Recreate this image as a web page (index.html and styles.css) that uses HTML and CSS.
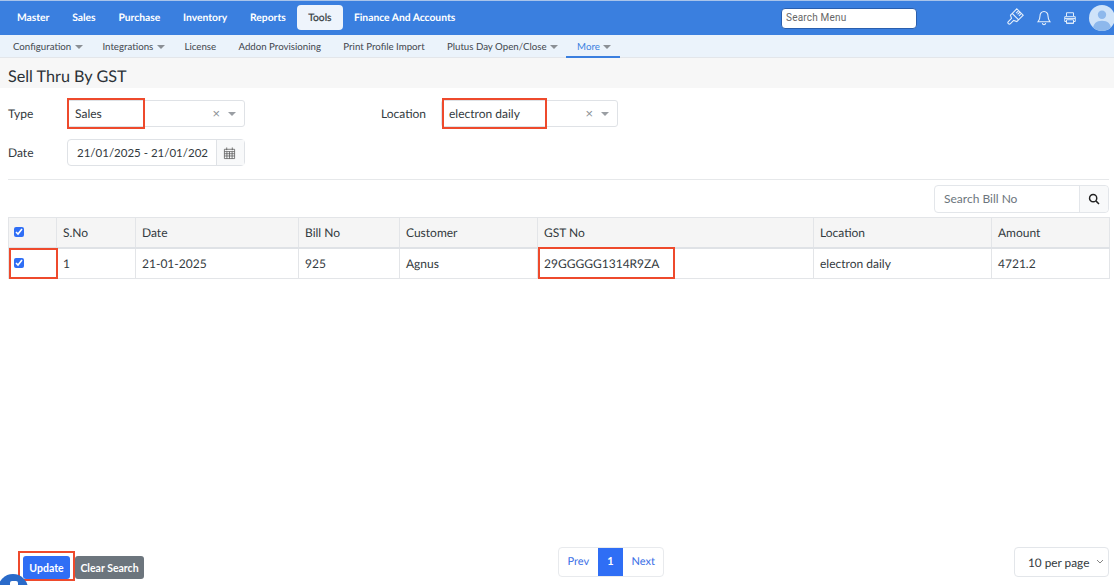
FILE: index.html
```html
<!DOCTYPE html>
<html lang="en">
<head>
<meta charset="utf-8">
<title>Sell Thru By GST</title>
<link rel="stylesheet" href="styles.css">
</head>
<body>
<div class="page">
  <header class="topbar">
    <nav class="mainnav">
      <a>Master</a><a>Sales</a><a>Purchase</a><a>Inventory</a><a>Reports</a><a class="active">Tools</a><a>Finance And Accounts</a>
    </nav>
    <input class="menu-search" placeholder="Search Menu">
    <div class="top-icons">
      <svg class="ti brush" viewBox="0 0 16 16"><g transform="rotate(45 8 8)"><path d="M3.500-.5h9v6.500h-9ZM3.500 6h9v2.500L9.500 10v4.500a1.500 1.500 0 0 1-3 0V10L3.500 8.500ZM6-.5V3M8-.5V3M10-.5V3"/></g></svg>
      <svg class="ti bell" viewBox="0 0 16 16"><path d="M8 1.500c-2.600 0-4 2-4 4.500 0 3-1 4.600-2 5.800h12c-1-1.200-2-2.800-2-5.800 0-2.500-1.400-4.500-4-4.500ZM6.300 13.200c.2 1 .9 1.500 1.700 1.500s1.500-.5 1.700-1.500"/></svg>
      <svg class="ti print" viewBox="0 0 16 16"><path d="M4 6V2h8v4M2 6.500h12v5.500h-2v2H4v-2H2ZM4 10h8v4H4ZM2 8.500h12"/></svg>
      <span class="avatar"><svg viewBox="0 0 28 28"><circle cx="14" cy="10.500" r="4.500"/><path d="M4 28c0-8 4-11 10-11s10 3 10 11Z"/></svg></span>
    </div>
  </header>
  <nav class="subnav">
    <a class="caret">Configuration</a><a class="caret">Integrations</a><a>License</a><a>Addon Provisioning</a><a>Print Profile Import</a><a class="caret before-more">Plutus Day Open/Close</a><a class="caret current">More</a>
  </nav>
  <h1 class="title">Sell Thru By GST</h1>
  <main class="content">
    <section class="filters">
      <div class="filter-row">
        <label class="flabel">Type</label>
        <div class="select type-select"><span class="value">Sales</span><span class="clear">×</span><span class="arrow"></span><i class="mark mark-type"></i></div>
        <label class="flabel loc-label">Location</label>
        <div class="select loc-select"><span class="value">electron daily</span><span class="clear">×</span><span class="arrow"></span><i class="mark mark-loc"></i></div>
      </div>
      <div class="filter-row">
        <label class="flabel">Date</label>
        <div class="date">
          <input class="date-value" readonly value="21/01/2025 - 21/01/2025">
          <span class="date-addon"><svg viewBox="0 0 14 14"><path d="M1.500 3h11v10h-11ZM1.500 5.500h11M4 1v3M10 1v3M1.500 7.800h11M1.500 10.200h11M4.200 5.500V13M7 5.500V13M9.800 5.500V13"/></svg></span>
        </div>
      </div>
    </section>
    <div class="search-row">
      <div class="bill-search">
        <input placeholder="Search Bill No">
        <span class="search-btn"><svg viewBox="0 0 14 14"><circle cx="6" cy="6" r="4.200"/><path d="m9.200 9.200 3.600 3.600"/></svg></span>
      </div>
    </div>
    <table class="grid">
      <colgroup><col class="c1"><col class="c2"><col class="c3"><col class="c4"><col class="c5"><col class="c6"><col class="c7"><col class="c8"></colgroup>
      <thead>
        <tr><th><input type="checkbox" checked></th><th>S.No</th><th>Date</th><th>Bill No</th><th>Customer</th><th>GST No</th><th>Location</th><th>Amount</th></tr>
      </thead>
      <tbody>
        <tr><td class="marked"><input type="checkbox" checked><i class="mark mark-check"></i></td><td>1</td><td>21-01-2025</td><td>925</td><td>Agnus</td><td class="marked">29GGGGG1314R9ZA<i class="mark mark-gst"></i></td><td>electron daily</td><td>4721.2</td></tr>
      </tbody>
    </table>
    <footer class="footer">
      <div class="actions">
        <button class="btn update">Update<i class="mark mark-update"></i></button>
        <button class="btn clear-search">Clear Search</button>
      </div>
      <div class="pager"><a>Prev</a><a class="on">1</a><a>Next</a></div>
      <div class="per-page">10 per page<svg viewBox="0 0 8 5"><path d="m1 1 3 3 3-3"/></svg></div>
    </footer>
  </main>
  <span class="help-bubble"></span>
</div>
</body>
</html>
```
FILE: styles.css
```css
* { box-sizing: border-box; }
html, body { margin: 0; height: 100%; }
body { font-family: Lato, "Open Sans", sans-serif; color: #333a40; background: #fff; overflow: hidden; text-rendering: geometricPrecision; }
.page { position: relative; width: 1114px; height: 585px; overflow: hidden; display: flex; flex-direction: column; }

.topbar { height: 35px; flex: none; background: #3a7fdf; border-top: 1px solid #a9c4ea; display: flex; align-items: center; padding: 0 0 0 5.600px; }
.mainnav { display: flex; align-items: center; flex: 1; margin-bottom: 1px; }
.mainnav a { color: #fff; font-size: 10.300px; font-weight: 700; padding: 1px 11.400px 0; line-height: 24px; border-radius: 4px; }
.mainnav a.active { background: #eef4fc; color: #333a40; padding: 1px 11px 0; margin-left: 0; font-weight: 400; -webkit-text-stroke: .2px #333a40; }
.menu-search { width: 136px; height: 21px; margin: 0 89px 0 0; border: 1px solid #2a5fae; border-radius: 4px; padding: 0 4px 2px; font: 10px Roboto, sans-serif; background: #fff; }
.menu-search::placeholder { color: #666; letter-spacing: .2px; }
.top-icons { display: flex; align-items: center; width: 108px; height: 34px; flex: none; }
.ti { width: 16px; height: 16px; fill: none; stroke: #e6f0fc; stroke-width: 1.100; flex: none; overflow: visible; }
.ti.bell { margin-left: 14px; }
.ti.print { margin-left: 11px; width: 14px; height: 14px; }
.avatar { width: 26px; height: 26px; border-radius: 50%; background: #cfe3f9; margin-left: 12px; overflow: hidden; flex: none; }
.avatar svg { display: block; width: 26px; height: 26px; fill: #8db8ec; }

.subnav { height: 23px; flex: none; background: #ebf3fb; border-bottom: 1px solid #e3e6ea; display: flex; padding-left: 13px; }
.subnav a { font-size: 9.700px; line-height: 24px; color: #3f464d; margin-right: 22.300px; white-space: nowrap; }
.subnav a.caret { margin-right: 19.700px; }
.subnav a.caret::after { content: ""; display: inline-block; border: 4px solid transparent; border-top-color: #8a8f95; border-bottom: 0; margin-left: 3.500px; vertical-align: 1px; }
.subnav a.before-more { margin-right: 8px; }
.subnav a.current { color: #3a7fdf; margin: 0; padding: 0 9px 0 11px; height: 23px; border-bottom: 2px solid #3a7fdf; }

.title { flex: none; margin: 0; height: 30px; background: #f7f7f7; padding-left: 8px; font-size: 16.200px; font-weight: 400; line-height: 37px; color: #2b3136; }
.content { flex: 1; padding: 0 5px 0 8px; display: flex; flex-direction: column; position: relative; }

.filters { padding-top: 12px; height: 91.500px; border-bottom: 1px solid #e6e8ea; }
.filter-row { display: flex; align-items: center; height: 27px; margin-bottom: 12px; font-size: 12px; }
.flabel { width: 59px; flex: none; }
.loc-label { margin-left: 136px; width: 60px; }
.select { position: relative; width: 178px; height: 27px; border: 1px solid #dfe2e6; border-radius: 3px; display: flex; align-items: center; padding: 0 8px 0 7px; }
.loc-select { width: 177px; }
.select .value { flex: 1; }
.clear { color: #8a8f95; font-size: 13px; margin-right: 8px; line-height: 1; }
.arrow { border: 4px solid transparent; border-top-color: #9a9ea3; border-bottom: 0; }
.date { width: 178px; height: 27px; border: 1px solid #dfe2e6; border-radius: 4px; display: flex; }
.date-value { flex: none; width: 148px; height: 25px; border: 0; background: transparent; outline: 0; padding: 0 8px 0 9px; color: #333a40; font: 11.500px Lato, sans-serif; }
.date-addon { width: 28px; background: #f8f9fa; border-left: 1px solid #dfe2e6; display: flex; align-items: center; justify-content: center; padding-right: 2px; }
.date-addon svg { width: 13px; height: 14px; fill: none; stroke: #555; stroke-width: .8; }

.search-row { display: flex; justify-content: flex-end; padding-top: 5px; height: 37px; }
.bill-search { display: flex; width: 175px; height: 28px; border: 1px solid #e3e6ea; border-radius: 4px; }
.bill-search input { flex: 1; min-width: 0; border: 0; background: transparent; padding: 0 9px; font: 12px Lato, sans-serif; }
.bill-search input::placeholder { color: #6c757d; opacity: 1; }
.search-btn { width: 29px; background: #f8f9fa; border-left: 1px solid #e3e6ea; display: flex; align-items: center; justify-content: center; border-radius: 0 4px 4px 0; }
.search-btn svg { width: 12px; height: 12px; fill: none; stroke: #222; stroke-width: 1.700; }

.grid { border-collapse: collapse; table-layout: fixed; width: 1101px; font-size: 12px; }
.c1 { width: 48px; } .c2 { width: 79px; } .c3 { width: 163px; } .c4 { width: 101px; } .c5 { width: 138px; } .c6 { width: 276px; } .c7 { width: 178px; } .c8 { width: 118px; }
.grid th, .grid td { border: 1px solid #e3e5e8; padding: 0 6px; text-align: left; font-weight: 400; color: #333a40; }
.grid th { background: #f5f5f5; height: 31px; border-bottom: 2px solid #dfe2e6; }
.grid td { height: 30px; }
.grid input { width: 10px; height: 10px; margin: 0 0 0 -1px; display: block; accent-color: #2f6ef5; }
.marked { position: relative; }

.mark { position: absolute; border: 2px solid #ee4a2c; pointer-events: none; display: block; }
.mark-type { left: -1px; top: -3px; width: 78px; height: 31px; }
.mark-loc { left: 0; top: -3px; width: 105px; height: 31px; }
.mark-check { left: 0; top: -1px; width: 49px; height: 31px; }
.mark-gst { left: 0; top: -2px; width: 137px; height: 32px; }
.mark-update { left: -5px; top: -5px; width: 57px; height: 30px; }

.footer { position: relative; margin-top: auto; height: 29px; margin-bottom: 9px; display: flex; align-items: flex-start; justify-content: space-between; }
.actions { display: flex; align-items: center; margin: 9px 0 0 15px; }
.btn { position: relative; border: 0; height: 23px; font: 700 10.500px Lato, sans-serif; color: #fff; padding: 0; border-radius: 3px; }
.update { width: 47px; background: #2f6ef5; }
.clear-search { width: 69px; background: #6c757d; margin-left: 5px; }
.pager { position: absolute; left: 550px; top: 0; height: 30px; display: flex; border: 1px solid #e8eaed; border-radius: 4px; font-size: 11px; overflow: hidden; }
.pager a { color: #3b6fe6; padding: 0 8.500px; line-height: 28px; }
.pager a.on { background: #2f6ef5; color: #fff; font-weight: 700; padding: 0 9.500px; }
.per-page { margin-left: auto; width: 95px; height: 30px; border: 1px solid #e3e6ea; border-radius: 4px; font-size: 11.800px; padding-left: 13px; display: flex; align-items: center; position: relative; }
.per-page svg { position: absolute; right: 4px; top: 11px; width: 8px; height: 5px; fill: none; stroke: #666; stroke-width: .8; }

.help-bubble { position: absolute; left: -2px; top: 574px; width: 30px; height: 30px; border-radius: 50%; background: #2a6ac9; }
.help-bubble::after { content: ""; position: absolute; left: 12px; top: 7px; width: 8px; height: 8px; border-radius: 2px; background: #fff; }
```
